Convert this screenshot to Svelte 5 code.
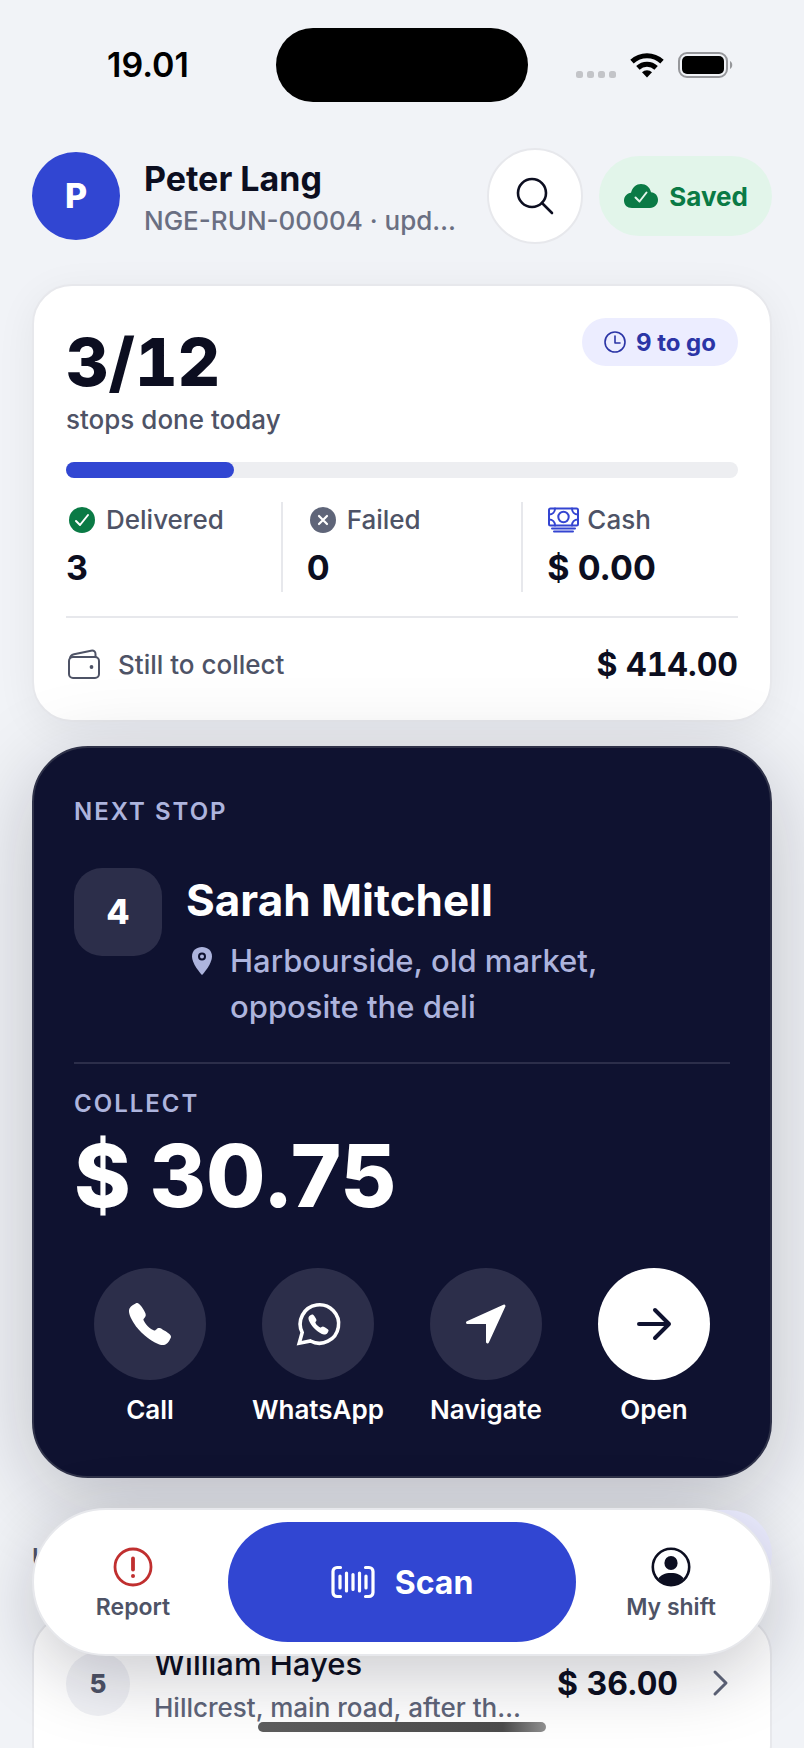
<script>
  const done = 3;
  const total = 12;
  const phonePath =
    'M391 480c-19.52 0-46.94-7.06-88-30-49.93-28-88.55-53.85-138.21-103.38C116.91 298.77 93.61 267.79 61 208.45c-36.84-67-30.56-102.12-23.54-117.13C45.82 73.38 58.16 62.65 74.11 52a176.3 176.3 0 0128.64-15.2c1-.43 1.93-.84 2.76-1.21 4.95-2.23 12.45-5.6 21.95-2 6.34 2.38 12 7.25 20.86 16 18.17 17.92 43 57.83 52.16 77.43 6.15 13.21 10.22 21.93 10.23 31.71 0 11.45-5.76 20.28-12.75 29.81-1.31 1.79-2.61 3.5-3.87 5.16-7.61 10-9.28 12.89-8.18 18.05 2.23 10.37 18.86 41.24 46.19 68.51s57.31 42.85 67.72 45.07c5.38 1.15 8.33-.59 18.65-8.47 1.48-1.13 3-2.3 4.59-3.47 10.66-7.93 19.08-13.54 30.26-13.54h.06c9.73 0 18.06 4.22 31.86 11.18 18 9.08 59.11 33.59 77.14 51.78 8.77 8.84 13.66 14.48 16.05 20.81 3.6 9.53.21 17-2 22-.37.83-.78 1.74-1.21 2.75a176.49 176.49 0 01-15.29 28.58c-10.63 15.9-21.4 28.21-39.38 36.58A67.42 67.42 0 01391 480z';
</script>

<div class="screen">
  <div class="status">
    <span class="time">19.01</span>
    <span class="island"></span>
    <span class="signals">
      <svg width="40" height="8" viewBox="0 0 40 8" fill="#c3c4c8">
        <rect x="0" y="1" width="7" height="7" rx="2.5" /><rect x="11" y="1" width="7" height="7" rx="2.5" />
        <rect x="22" y="1" width="7" height="7" rx="2.5" /><rect x="33" y="1" width="7" height="7" rx="2.5" />
      </svg>
      <svg class="wifi" width="34" height="26" viewBox="0 0 34 26" fill="none" stroke="#000" stroke-width="5">
        <path d="M2 9.6a22 22 0 0 1 30 0" /><path d="M7.9 15.8a13.4 13.4 0 0 1 18.2 0" />
        <path d="M17 25.4l-5-5.2a7.4 7.4 0 0 1 10 0z" fill="#000" stroke="none" />
      </svg>
      <svg width="56" height="26" viewBox="0 0 56 26">
        <rect x="1" y="1" width="48" height="24" rx="8" fill="none" stroke="#96979b" stroke-width="2" />
        <rect x="4" y="4" width="42" height="18" rx="5" />
        <path d="M52 9v8c3-1.400 3-6.600 0-8z" fill="#96979b" />
      </svg>
    </span>
  </div>

  <main>
    <header>
      <span class="avatar">P</span>
      <div class="who">
        <h1>Peter Lang</h1>
        <p>NGE-RUN-00004 · updated 19.01</p>
      </div>
      <button class="search" aria-label="Search">
        <svg width="40" height="40" viewBox="0 0 40 40" fill="none" stroke="#0c0e20" stroke-width="2.600" stroke-linecap="round">
          <circle cx="17" cy="17" r="14" /><path d="M27 27l10 10" />
        </svg>
      </button>
      <span class="saved">
        <svg width="36" height="26" viewBox="0 0 36 26">
          <path d="M9 25C4 25 1 22 1 17.500 1 13 4.300 10.300 8 9.700 9.500 4.300 13.300 1 18 1c5 0 9 3.200 10 8.300 4.200.4 7 3.400 7 7.500 0 4.600-3.300 8.200-8 8.200z" fill="#0a7a45" />
          <path d="M12.500 14.500l4 4 7-9" fill="none" stroke="#e2f5ea" stroke-width="2" stroke-linecap="round" stroke-linejoin="round" />
        </svg>
        Saved
      </span>
    </header>

    <section class="card summary">
      <div class="top">
        <div>
          <p class="count">{done}/{total}</p>
          <p class="muted short">stops done today</p>
        </div>
        <span class="togo">
          <svg width="22" height="22" viewBox="0 0 22 22" fill="none" stroke="#2b35a6" stroke-width="1.600" stroke-linecap="round" stroke-linejoin="round">
            <circle cx="11" cy="11" r="10" /><path d="M11 5v7h5" />
          </svg>
          {total - done} to go
        </span>
      </div>
      <div class="track"><div class="fill" style="width: {(done / total) * 100}%"></div></div>
      <div class="stats">
        <div class="stat">
          <p class="muted label">
            <svg width="32" height="32" viewBox="0 0 32 32" fill="none">
              <circle cx="16" cy="16" r="13" fill="#0a7a45" />
              <path d="M10 17l4 4 8-10" stroke="#fff" stroke-width="2" stroke-linecap="round" stroke-linejoin="round" />
            </svg>
            Delivered
          </p>
          <p class="value">3</p>
        </div>
        <span class="rule"></span>
        <div class="stat">
          <p class="muted label">
            <svg width="32" height="32" viewBox="0 0 32 32" fill="none">
              <circle cx="16" cy="16" r="13" fill="#5f6579" />
              <path d="M12 12l8 8m0-8l-8 8" stroke="#fff" stroke-width="2.200" stroke-linecap="round" />
            </svg>
            Failed
          </p>
          <p class="value">0</p>
        </div>
        <span class="rule"></span>
        <div class="stat">
          <p class="muted label">
            <svg width="32" height="32" viewBox="0 0 32 32" fill="none" stroke="#3445d1" stroke-width="2" stroke-linecap="round">
              <rect x="2" y="4.500" width="29" height="17" rx="1.500" />
              <circle cx="16.500" cy="13" r="5.200" />
              <path d="M2 10.500c3.600 0 6-2.400 6-6M31 10.500c-3.600 0-6-2.400-6-6M2 15.500c3.600 0 6 2.400 6 6M31 15.500c-3.600 0-6 2.400-6 6M5 24.400h23M7 27.500h19" />
            </svg>
            Cash
          </p>
          <p class="value">$ 0.00</p>
        </div>
      </div>
      <div class="collect">
        <svg width="36" height="36" viewBox="0 0 36 36" fill="none" stroke="#4e5366" stroke-width="2" stroke-linejoin="round">
          <rect x="3" y="10" width="30" height="21" rx="4" />
          <path d="M4 11.500c0-2.500 1.500-3.700 4-4.300l17-3.500c3-.6 4.500 1 4.500 3.300v3" />
          <circle cx="25.500" cy="20" r="1.900" fill="#4e5366" stroke="none" />
        </svg>
        <span class="muted">Still to collect</span>
        <strong>$ 414.00</strong>
      </div>
    </section>

    <section class="next">
      <h2 class="caps">NEXT STOP</h2>
      <div class="stop">
        <span class="number">4</span>
        <div class="place">
          <h3>Sarah Mitchell</h3>
          <div class="address">
            <svg width="32" height="46" viewBox="0 0 32 46">
              <path d="M16 37c-2-2-10-11.500-10-18.500C6 12.500 10.500 9 16 9s10 3.500 10 9.500C26 25.500 18 35 16 37z" fill="#adb4dd" />
              <circle cx="16" cy="18.500" r="3" fill="none" stroke="#0f1230" stroke-width="2" />
            </svg>
            <p>Harbourside, old market, opposite the deli</p>
          </div>
        </div>
      </div>
      <div class="due">
        <h2 class="caps">COLLECT</h2>
        <p class="amount">$ 30.75</p>
      </div>
      <div class="actions">
        <button>
          <span class="disc"><svg width="48" height="48" viewBox="0 0 512 512" fill="#fff"><path d={phonePath} /></svg></span>
          Call
        </button>
        <button>
          <span class="disc">
            <svg width="48" height="48" viewBox="0 0 48 48">
              <path d="M5.200 43.200l3-10.700A19.200 19.200 0 1 1 16.500 41z" fill="none" stroke="#fff" stroke-width="3.600" stroke-linejoin="miter" />
              <svg x="13" y="13" width="23" height="23" viewBox="0 0 512 512" fill="#fff"><path d={phonePath} /></svg>
            </svg>
          </span>
          WhatsApp
        </button>
        <button>
          <span class="disc">
            <svg width="48" height="48" viewBox="0 0 48 48" fill="#fff" stroke="#fff" stroke-width="3" stroke-linejoin="round"><path d="M5.500 22.500L42 6 25.500 42V22.500z" /></svg>
          </span>
          Navigate
        </button>
        <button>
          <span class="disc light">
            <svg width="48" height="48" viewBox="0 0 48 48" fill="none" stroke="#0f1230" stroke-width="4" stroke-linecap="round" stroke-linejoin="round"><path d="M9 24h30M25 10l14 14-14 14" /></svg>
          </span>
          Open
        </button>
      </div>
    </section>

    <section class="later">
      <div class="heading">
        <h2 class="caps">UP NEXT</h2>
        <button class="all" aria-label="All stops"></button>
      </div>
      <a class="card row" href="#stop-5">
        <span class="index">5</span>
        <span class="info">
          <span class="name">William Hayes</span>
          <span class="where">Hillcrest, main road, after the bakery</span>
        </span>
        <strong>$ 36.00</strong>
        <svg width="36" height="36" viewBox="0 0 36 36" fill="none" stroke="#5f6579" stroke-width="3" stroke-linecap="round" stroke-linejoin="round"><path d="M13 6l11 11-11 11" /></svg>
      </a>
    </section>
  </main>

  <nav>
    <button class="tab">
      <svg width="40" height="40" viewBox="0 0 40 40" fill="none" stroke="#c02f2f" stroke-linecap="round">
        <circle cx="20" cy="20" r="18" stroke-width="2.800" />
        <path d="M20 11.500v11" stroke-width="3.800" /><circle cx="20" cy="29" r="2" fill="#c02f2f" stroke="none" />
      </svg>
      Report
    </button>
    <button class="scan">
      <svg width="44" height="36" viewBox="0 0 44 36" fill="none" stroke="#fff" stroke-width="3.200" stroke-linecap="round" stroke-linejoin="round">
        <path d="M9.500 3.500H6a4 4 0 0 0-4 4v21a4 4 0 0 0 4 4h3.500M34.500 3.500H38a4 4 0 0 1 4 4v21a4 4 0 0 1-4 4h-3.500M9 12v12M15.500 9v18M22 10.500v15M28.500 9v18M35 12v12" />
      </svg>
      Scan
    </button>
    <button class="tab">
      <svg width="40" height="40" viewBox="0 0 40 40">
        <circle cx="20" cy="20" r="18.200" fill="none" stroke="#0c0e20" stroke-width="2.600" />
        <ellipse cx="20" cy="16" rx="6.600" ry="7" fill="#0c0e20" />
        <path d="M7.500 31.500C9.500 28 14 26 20 26s10.500 2 12.500 5.500C29.500 36 25 38.500 20 38.500S10.500 36 7.500 31.500z" fill="#0c0e20" />
      </svg>
      My shift
    </button>
  </nav>
  <span class="home"></span>
</div>

<style>
  :global(body) { margin: 0; }
  .screen {
    position: relative;
    height: 100vh;
    overflow: hidden;
    background: #f1f3f7;
    color: #0c0e20;
    font-family: Inter, "Liberation Sans", sans-serif;
    font-size: 26px;
    font-weight: 500;
  }
  .screen *, .screen { box-sizing: border-box; }
  h1, h2, h3, p { margin: 0; }
  svg { flex: none; display: block; }
  button { border: 0; padding: 0; background: none; font: inherit; color: inherit; cursor: pointer; }
  strong { font-size: 32px; font-weight: 700; line-height: 44px; white-space: nowrap; font-variant-numeric: tabular-nums; }

  .status {
    position: absolute;
    inset: 0 0 auto;
    z-index: 2;
    display: grid;
    grid-template-columns: 1fr 252px 1fr;
    align-items: center;
    padding-top: 28px;
    color: #000;
  }
  .time { padding-left: 20px; text-align: center; font-size: 34px; font-weight: 600; line-height: 74px; }
  .island { height: 74px; border-radius: 37px; background: #000; }
  .signals { display: flex; align-items: center; gap: 14px; padding-left: 48px; }
  .signals svg:first-child { align-self: flex-end; }

  main {
    height: 100%;
    overflow-y: auto;
    scrollbar-width: none;
    padding: 148px 32px 0;
  }
  header { display: flex; align-items: center; height: 96px; margin-bottom: 40px; }
  .avatar {
    flex: none;
    width: 88px;
    border-radius: 50%;
    background: #3146d2;
    color: #fff;
    font-size: 34px;
    font-weight: 800;
    line-height: 88px;
    text-align: center;
  }
  .who { flex: 1; min-width: 0; margin: 0 24px; padding-top: 4px; }
  h1 { margin-bottom: 2px; font-size: 34px; font-weight: 700; line-height: 44px; }
  .who p { overflow: hidden; text-overflow: ellipsis; white-space: nowrap; color: #6a6f82; line-height: 36px; }
  .search {
    flex: none;
    display: grid;
    place-items: center;
    width: 96px;
    height: 96px;
    margin-right: 16px;
    border: 2px solid #e7e8ec;
    border-radius: 50%;
    background: #fff;
  }
  .saved {
    flex: none;
    display: flex;
    align-items: center;
    gap: 10px;
    height: 80px;
    padding: 0 24px;
    border-radius: 40px;
    background: #e2f5ea;
    color: #0a7a45;
    font-weight: 700;
  }

  .card { border: 2px solid #e7e8ec; border-radius: 40px; background: #fff; }
  .summary { padding: 32px; box-shadow: 0 8px 40px rgba(12, 14, 32, 0.06); }
  .top { display: flex; justify-content: space-between; align-items: flex-start; }
  .count { font-size: 66px; font-weight: 800; line-height: 88px; font-variant-numeric: tabular-nums; }
  .muted { color: #4e5366; line-height: 36px; }
  .short { line-height: 28px; }
  .togo {
    display: flex;
    align-items: center;
    gap: 10px;
    height: 48px;
    padding: 0 22px;
    border-radius: 24px;
    background: #ecedff;
    color: #2b35a6;
    font-size: 24px;
    font-weight: 700;
  }
  .track { height: 16px; margin: 28px 0 24px; border-radius: 8px; background: #edeef1; }
  .fill { height: 100%; border-radius: 8px; background: #3146d2; }
  .stats { display: flex; gap: 24px; padding-bottom: 24px; border-bottom: 2px solid #e7e8ec; }
  .stat { flex: 1; min-width: 0; }
  .rule { width: 2px; background: #e7e8ec; }
  .label { display: flex; align-items: center; gap: 8px; margin-bottom: 6px; }
  .value { font-size: 34px; font-weight: 700; line-height: 48px; }
  .collect { display: flex; align-items: center; gap: 16px; height: 70px; padding-top: 24px; }
  .collect strong { margin-left: auto; }

  .next {
    position: relative;
    margin-top: 24px;
    padding: 48px 40px 50px;
    border: 2px solid #2f3249;
    border-radius: 56px;
    background: #0f1230;
    box-shadow: 0 20px 88px rgba(12, 14, 32, 0.23);
    color: #fff;
  }
  .caps { font-size: 24px; font-weight: 600; line-height: 32px; letter-spacing: 2px; color: #adb4dd; }
  .stop { display: flex; gap: 24px; margin-top: 40px; }
  .number {
    flex: none;
    width: 88px;
    height: 88px;
    border-radius: 28px;
    background: #2c2e4a;
    font-size: 34px;
    font-weight: 800;
    line-height: 88px;
    text-align: center;
  }
  h3 { font-size: 44px; font-weight: 700; line-height: 64px; }
  .address { display: flex; gap: 12px; margin-top: 6px; color: #adb4dd; font-size: 31px; line-height: 46px; }
  .due { margin-top: 32px; padding-top: 24px; border-top: 2px solid #2c2e4a; }
  .amount { margin-top: 4px; font-size: 86px; font-weight: 800; line-height: 104px; }
  .actions { display: grid; grid-template-columns: repeat(4, 1fr); gap: 16px; margin-top: 40px; }
  .actions button { display: flex; flex-direction: column; align-items: center; gap: 14px; font-weight: 600; line-height: 32px; }
  .disc { display: grid; place-items: center; width: 112px; height: 112px; border-radius: 50%; background: #2c2e4a; }
  .light { background: #fff; }

  .later { position: relative; margin-top: 32px; }
  .heading { display: flex; align-items: center; justify-content: space-between; margin-bottom: 16px; }
  .heading .caps { padding-top: 8px; color: #4e5366; }
  .all { width: 180px; height: 88px; border-radius: 44px; background: #ecedff; }
  .row { display: flex; align-items: center; gap: 24px; padding: 26px 32px 56px; color: inherit; text-decoration: none; }
  .index {
    width: 64px;
    border-radius: 50%;
    background: #f0f1f5;
    color: #4e5366;
    font-weight: 800;
    line-height: 64px;
    text-align: center;
  }
  .info { flex: 1; min-width: 0; display: flex; flex-direction: column; gap: 4px; }
  .name { font-size: 31px; line-height: 44px; }
  .where { overflow: hidden; text-overflow: ellipsis; white-space: nowrap; color: #5f6579; line-height: 36px; }

  nav {
    position: absolute;
    inset: auto 32px 92px;
    display: grid;
    grid-template-columns: 1fr 2fr 1fr;
    gap: 8px;
    padding: 12px;
    border: 2px solid #e7e8ec;
    border-radius: 74px;
    background: #fff;
    box-shadow: 0 20px 72px rgba(12, 14, 32, 0.22);
  }
  .tab {
    display: flex;
    flex-direction: column;
    align-items: center;
    justify-content: center;
    gap: 6px;
    padding-top: 4px;
    color: #4e5366;
    font-size: 23px;
    font-weight: 600;
    line-height: 28px;
  }
  .scan {
    display: flex;
    align-items: center;
    justify-content: center;
    gap: 20px;
    height: 120px;
    border-radius: 60px;
    background: #3146d2;
    color: #fff;
    font-size: 32px;
    font-weight: 700;
  }
  .home {
    position: absolute;
    left: 50%;
    bottom: 16px;
    width: 288px;
    height: 10px;
    margin-left: -144px;
    border-radius: 5px;
    background: linear-gradient(90deg, #5c5c5c, #4a4a4a 85%, #8f8f8f);
  }
</style>
